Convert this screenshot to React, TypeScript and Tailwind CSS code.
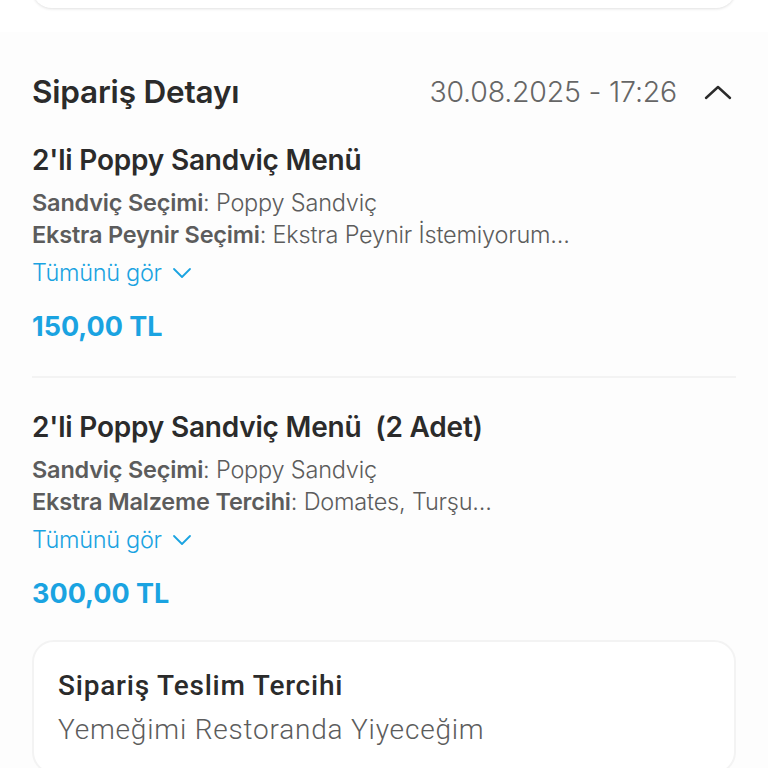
import React from "react";

const main = { fontFamily: "Inter, 'Noto Sans', sans-serif" };
const alt = { fontFamily: "Roboto, 'Noto Sans', sans-serif" };

function ChevronDown() {
  return (
    <svg width="20" height="12" viewBox="0 0 20 12" fill="none" className="ml-[10px]">
      <path d="M2 2l8 8 8-8" stroke="#1aa3e1" strokeWidth="1.8" strokeLinecap="round" strokeLinejoin="round" />
    </svg>
  );
}

function Item({ title, lines, price }: { title: string; lines: [string, string][]; price: string }) {
  return (
    <div className="flex flex-col">
      <div className="text-[28px] leading-[34px] font-semibold text-[#2b2b2b] tracking-[-0.2px] whitespace-pre">{title}</div>
      <div className="mt-[10px] flex flex-col">
        {lines.map(([k, v], i) => (
          <div key={i} className="text-[23.5px] leading-[32px] text-[#5c5c5c] tracking-[-0.2px] whitespace-nowrap">
            <span className="font-semibold">{k}</span>
            <span className="font-light">: {v}</span>
          </div>
        ))}
      </div>
      <div className="mt-[6px] flex items-center text-[23.5px] leading-[32px] text-[#1aa3e1] font-light tracking-[-0.3px]">
        Tümünü gör
        <ChevronDown />
      </div>
      <div className="mt-[23px] text-[27px] leading-[30px] font-bold text-[#1aa3e1]">{price}</div>
    </div>
  );
}

export default function App() {
  return (
    <div className="w-[768px] h-[768px] overflow-hidden bg-white" style={main}>
      <div className="mx-[32px] -mt-[12px] rounded-b-[20px] bg-white shadow-[0_1px_3px_rgba(0,0,0,0.12)]" style={{ height: 20 }} />
      <div className="mt-[24px] bg-[#fdfdfd] px-[32px] pt-[40px]">
        <div className="flex items-center justify-between">
          <div className="text-[31.5px] leading-[40px] font-semibold text-[#2b2b2b] tracking-[-0.2px]">Sipariş Detayı</div>
          <div className="flex items-center">
            <div className="text-[28.5px] leading-[40px] font-light text-[#666666] tracking-[-0.2px]">30.08.2025 - 17:26</div>
            <svg width="28" height="16" viewBox="0 0 28 16" fill="none" className="ml-[27px] mr-[4px]">
              <path d="M2 14L14 3l12 11" stroke="#2b2b2b" strokeWidth="2.4" strokeLinecap="round" strokeLinejoin="round" />
            </svg>
          </div>
        </div>
        <div className="mt-[31px]">
          <Item
            title="2'li Poppy Sandviç Menü"
            lines={[["Sandviç Seçimi", "Poppy Sandviç"], ["Ekstra Peynir Seçimi", "Ekstra Peynir İstemiyorum..."]]}
            price="150,00 TL"
          />
        </div>
        <div className="mt-[34px] h-[2px] bg-[#f3f3f3]" />
        <div className="mt-[32px]">
          <Item
            title="2'li Poppy Sandviç Menü  (2 Adet)"
            lines={[["Sandviç Seçimi", "Poppy Sandviç"], ["Ekstra Malzeme Tercihi", "Domates, Turşu..."]]}
            price="300,00 TL"
          />
        </div>
        <div className="mt-[31px] rounded-[22px] border-2 border-[#f3f3f3] bg-white px-[24px] pt-[26px] pb-[24px]" style={alt}>
          <div className="text-[28px] leading-[36px] font-medium text-[#2b2b2b] tracking-[0.8px]">Sipariş Teslim Tercihi</div>
          <div className="mt-[8px] text-[28px] leading-[36px] font-light text-[#5c5c5c] tracking-[0.8px]">Yemeğimi Restoranda Yiyeceğim</div>
        </div>
      </div>
    </div>
  );
}
